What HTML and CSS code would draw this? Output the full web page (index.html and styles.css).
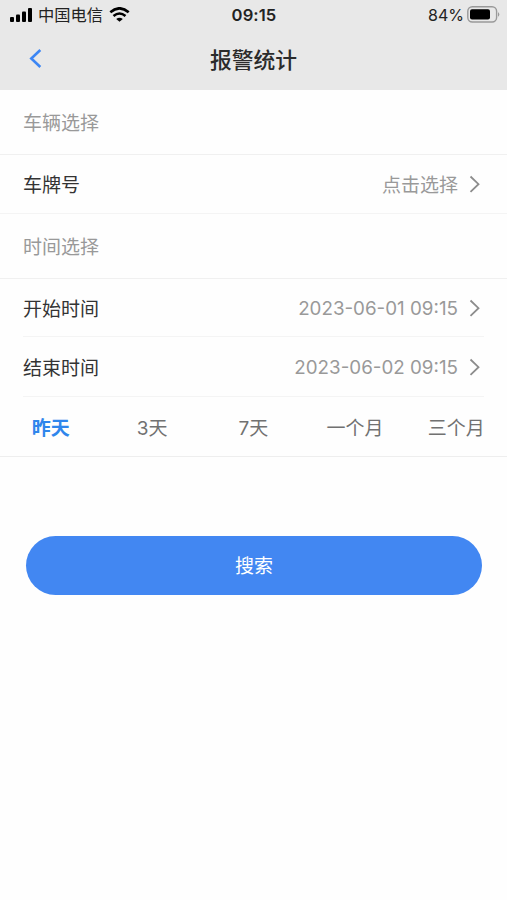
FILE: index.html
```html
<!DOCTYPE html>
<html lang="zh-CN">
<head>
<meta charset="utf-8">
<title>报警统计</title>
<link rel="stylesheet" href="styles.css">
</head>
<body>
<header class="top">
  <div class="status">
    <div class="carrier">
      <svg width="23" height="14" viewBox="0 0 23 14"><rect x="0" y="9" width="4" height="5" rx="1"/><rect x="6" y="6.5" width="4" height="7.5" rx="1"/><rect x="12" y="3.5" width="4" height="10.5" rx="1"/><rect x="18" y="0" width="4" height="14" rx="1"/></svg>
      <span class="carrier-name">中国电信</span>
      <svg class="wifi" width="21" height="15" viewBox="0 0 21 15"><path d="M1.3 5.2Q10.5-2.6 19.7 5.2M4.5 9Q10.5 4 16.5 9" fill="none" stroke="#000" stroke-width="2.6"/><path d="M7.2 12Q10.5 9.6 13.8 12L10.5 14.8Z"/></svg>
    </div>
    <span class="clock">09:15</span>
    <div class="power"><span>84%</span>
      <svg width="33" height="17" viewBox="0 0 33 17"><rect x=".8" y=".8" width="28.8" height="15.2" rx="4.5" fill="none" stroke="#999" stroke-width="1.4"/><rect x="3" y="3.2" width="20" height="10.4" rx="2"/><path d="M31 6q2.6 2.4 0 4.8z" fill="#999"/></svg>
    </div>
  </div>
  <div class="nav">
    <svg class="back" width="14" height="20" viewBox="0 0 14 20"><path d="M12.3 1L3.3 9.5l9 8.5"/></svg>
    <h1>报警统计</h1>
  </div>
</header>
<main>
  <div class="section">车辆选择</div>
  <div class="row"><span class="label">车牌号</span><span class="value">点击选择</span><svg class="arrow" width="12" height="18" viewBox="0 0 12 18"><path d="M1.5 1.5l8 7.7-8 7.7"/></svg></div>
  <div class="section">时间选择</div>
  <div class="row start"><span class="label">开始时间</span><span class="value date">2023-06-01 09:15</span><svg class="arrow" width="12" height="18" viewBox="0 0 12 18"><path d="M1.5 1.5l8 7.7-8 7.7"/></svg></div>
  <div class="row end"><span class="label">结束时间</span><span class="value date">2023-06-02 09:15</span><svg class="arrow" width="12" height="18" viewBox="0 0 12 18"><path d="M1.5 1.5l8 7.7-8 7.7"/></svg></div>
  <div class="ranges"><span class="active">昨天</span><span>3天</span><span>7天</span><span>一个月</span><span>三个月</span></div>
  <button class="search">搜索</button>
</main>
</body>
</html>
```
FILE: styles.css
```css
* { box-sizing: border-box; }
body { margin: 0; min-height: 900px; background: #fefefe; color: #333; font: 19px/28px Inter, "Noto Sans CJK SC", sans-serif; }
svg { display: block; flex: none; }
.top { height: 90px; background: #e8e8e8; }
.status { display: grid; grid-template-columns: 1fr auto 1fr; align-items: center; height: 29px; padding: 0 7px 0 10px; color: #222; font-size: 16px; }
.carrier { display: flex; align-items: center; gap: 5px; }
.carrier-name { font-size: 16.3px; line-height: 26px; }
.wifi { margin-left: 1px; }
.clock { font-size: 16.6px; font-weight: 600; letter-spacing: .1px; margin-right: 2px; }
.power { display: flex; justify-content: flex-end; align-items: center; gap: 3px; }
.nav { display: grid; grid-template-columns: 40px 1fr 40px; align-items: center; height: 60px; padding: 0 28px; }
.back path { fill: none; stroke: #3c86f4; stroke-width: 2.6; }
h1 { margin: 0; padding-top: 2px; text-align: center; font-size: 21.8px; font-weight: 500; color: #2b2b2b; }
.section { height: 65px; padding: 3px 23px 0; border-bottom: 1px solid #f0f0f0; line-height: 61px; color: #999; }
.row { display: flex; align-items: center; height: 59px; padding: 0 26px 0 23px; border-bottom: 1px solid #f4f4f4; }
.label, .value { padding-top: 4px; }
.value { margin-left: auto; margin-right: 11px; color: #999; }
.date { padding-top: 2px; font-size: 18.8px; }
.arrow path { fill: none; stroke: #8c8c8c; stroke-width: 1.8; }
.start, .end { margin: 0 23px; padding: 0 3px 0 0; }
.start { height: 58px; }
.end { height: 60px; }
.ranges { display: grid; grid-template-columns: repeat(5, 1fr); height: 60px; padding-top: 2px; border-bottom: 1px solid #eee; line-height: 59px; text-align: center; color: #717171; }
.active { color: #2f86ec; font-weight: 700; }
.search { display: block; width: 456px; height: 59px; margin: 79px 25px 0 26px; padding: 2px 0 0; border: 0; border-radius: 30px; background: #4287f2; color: #fff; font: inherit; }
```
